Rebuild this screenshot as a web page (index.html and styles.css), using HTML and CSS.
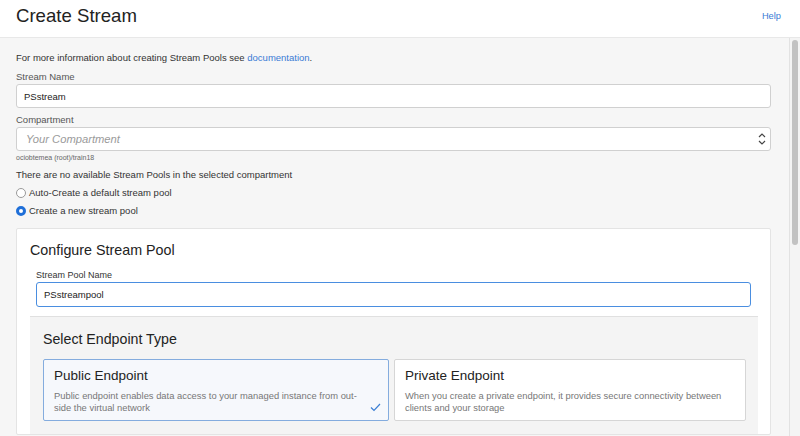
FILE: index.html
```html
<!DOCTYPE html>
<html lang="en">
<head>
<meta charset="utf-8">
<title>Create Stream</title>
<link rel="stylesheet" href="styles.css">
</head>
<body>
<header class="header">
  <h1 class="title">Create Stream</h1>
  <a class="help" href="#">Help</a>
</header>
<div class="main">
  <div class="content">
    <p class="info">For more information about creating Stream Pools see <a href="#" class="link">documentation</a>.</p>
    <label class="label">Stream Name</label>
    <div class="input">PSstream</div>
    <label class="label">Compartment</label>
    <div class="input select">
      <span class="placeholder">Your Compartment</span>
      <svg class="arrows" width="8" height="14" viewBox="0 0 8 14"><path d="M1 5 L4 2 L7 5" fill="none" stroke="#444" stroke-width="1.2"/><path d="M1 9 L4 12 L7 9" fill="none" stroke="#444" stroke-width="1.2"/></svg>
    </div>
    <div class="hint">ociobtemea (root)/train18</div>
    <p class="note">There are no available Stream Pools in the selected compartment</p>
    <div class="radio-row"><span class="radio"></span>Auto-Create a default stream pool</div>
    <div class="radio-row"><span class="radio checked"></span>Create a new stream pool</div>

    <section class="panel">
      <h2 class="panel-title">Configure Stream Pool</h2>
      <div class="field">
        <label class="label small">Stream Pool Name</label>
        <div class="input focus">PSstreampool</div>
      </div>
      <div class="sub">
        <h3 class="sub-title">Select Endpoint Type</h3>
        <div class="cards">
          <div class="card selected">
            <div class="card-title">Public Endpoint</div>
            <div class="card-desc">Public endpoint enables data access to your managed instance from out-<br>side the virtual network</div>
            <svg class="check" width="11" height="9" viewBox="0 0 11 9"><path d="M1 4.5 L4 7.5 L10 1" fill="none" stroke="#3b7fd4" stroke-width="1.2"/></svg>
          </div>
          <div class="card">
            <div class="card-title">Private Endpoint</div>
            <div class="card-desc">When you create a private endpoint, it provides secure connectivity between clients and your storage</div>
          </div>
        </div>
      </div>
    </section>
  </div>
  <div class="scrollbar"><div class="thumb"></div></div>
</div>
</body>
</html>
```
FILE: styles.css
```css
* { box-sizing: border-box; }
html, body {
  margin: 0;
  width: 800px;
  height: 436px;
  overflow: hidden;
}
body {
  font-family: "Liberation Sans", Arial, sans-serif;
  color: #333;
  background: #fff;
  display: flex;
  flex-direction: column;
}
.header {
  height: 38px;
  flex: none;
  display: flex;
  justify-content: space-between;
  align-items: center;
  padding: 0 19px 0 16px;
  border-bottom: 1px solid #e8e8e8;
  background: #fff;
}
.title {
  margin: 0 0 6px;
  font-size: 18.6px;
  font-weight: normal;
  color: #222;
}
.help {
  font-size: 9.3px;
  color: #3a7bd5;
  text-decoration: none;
  margin-bottom: 6px;
}
.main {
  flex: 1;
  display: flex;
  min-height: 0;
}
.content {
  flex: 1;
  background: #f6f6f6;
  padding: 13px 18px 0 16px;
  overflow: hidden;
}
.scrollbar {
  width: 11px;
  flex: none;
  background: #f4f4f4;
  border-left: 1px solid #e2e2e2;
  padding: 2px 2px 0 2px;
}
.thumb {
  width: 6px;
  height: 205px;
  background: #c2c2c2;
  border-radius: 3px;
}
.info {
  margin: 0;
  font-size: 9.5px;
  line-height: 14px;
  color: #333;
}
.link { color: #3a7bd5; text-decoration: none; }
.label {
  display: block;
  font-size: 9.5px;
  line-height: 13px;
  color: #555;
  margin-top: 5px;
  margin-bottom: 1px;
}
.input {
  height: 24px;
  background: #fff;
  border: 1px solid #d0d0d0;
  border-radius: 3px;
  padding: 0 7px;
  display: flex;
  align-items: center;
  font-size: 9.5px;
  color: #222;
}
.select {
  justify-content: space-between;
  padding: 0 4px 0 9px;
}
.placeholder {
  font-style: italic;
  font-size: 11.2px;
  color: #9a9a9a;
}
.arrows { display: block; }
.hint {
  font-size: 7px;
  line-height: 10px;
  color: #666;
  margin-top: 2px;
}
.note {
  margin: 5px 0 0;
  font-size: 9.5px;
  line-height: 14px;
  color: #333;
}
.radio-row {
  display: flex;
  align-items: center;
  font-size: 9.5px;
  line-height: 14px;
  color: #333;
  margin-top: 4px;
}
.radio-row + .radio-row { margin-top: 4px; }
.radio {
  width: 10px;
  height: 10px;
  border-radius: 50%;
  border: 1px solid #9a9a9a;
  background: #fff;
  margin-right: 3px;
  flex: none;
}
.radio.checked {
  border: 3px solid #1f6fd8;
  background: #fff;
}
.panel {
  margin-top: 10px;
  background: #fff;
  border: 1px solid #e4e4e4;
  border-radius: 2px;
  padding: 11px 12px 0 13px;
}
.panel-title {
  margin: 0;
  font-size: 14.3px;
  font-weight: normal;
  line-height: 20px;
  color: #222;
}
.field {
  padding: 6px 7px 0 6px;
}
.label.small {
  font-size: 9px;
  margin-top: 3px;
  margin-bottom: 0;
  color: #333;
}
.input.focus {
  border: 1.5px solid #4a8ee0;
  height: 25px;
}
.sub {
  margin-top: 9px;
  background: #f4f4f4;
  border-top: 1px solid #e0e0e0;
  padding: 12px 12px 13px 13px;
}
.sub-title {
  margin: 0;
  font-size: 14.2px;
  font-weight: normal;
  line-height: 20px;
  color: #222;
}
.cards {
  display: flex;
  gap: 5px;
  margin-top: 10px;
}
.card {
  flex: 1;
  height: 62px;
  background: #fff;
  border: 1px solid #d6d6d6;
  border-radius: 2px;
  padding: 7px 10px 0 10px;
  position: relative;
}
.card.selected {
  flex: 0 0 346px;
  background: #f6f8fc;
  border-color: #84acde;
}
.card-title {
  font-size: 13.5px;
  line-height: 18px;
  color: #222;
}
.card-desc {
  margin-top: 5px;
  font-size: 9.4px;
  line-height: 12px;
  color: #777;
}
.check {
  position: absolute;
  right: 7px;
  bottom: 8px;
}
```
